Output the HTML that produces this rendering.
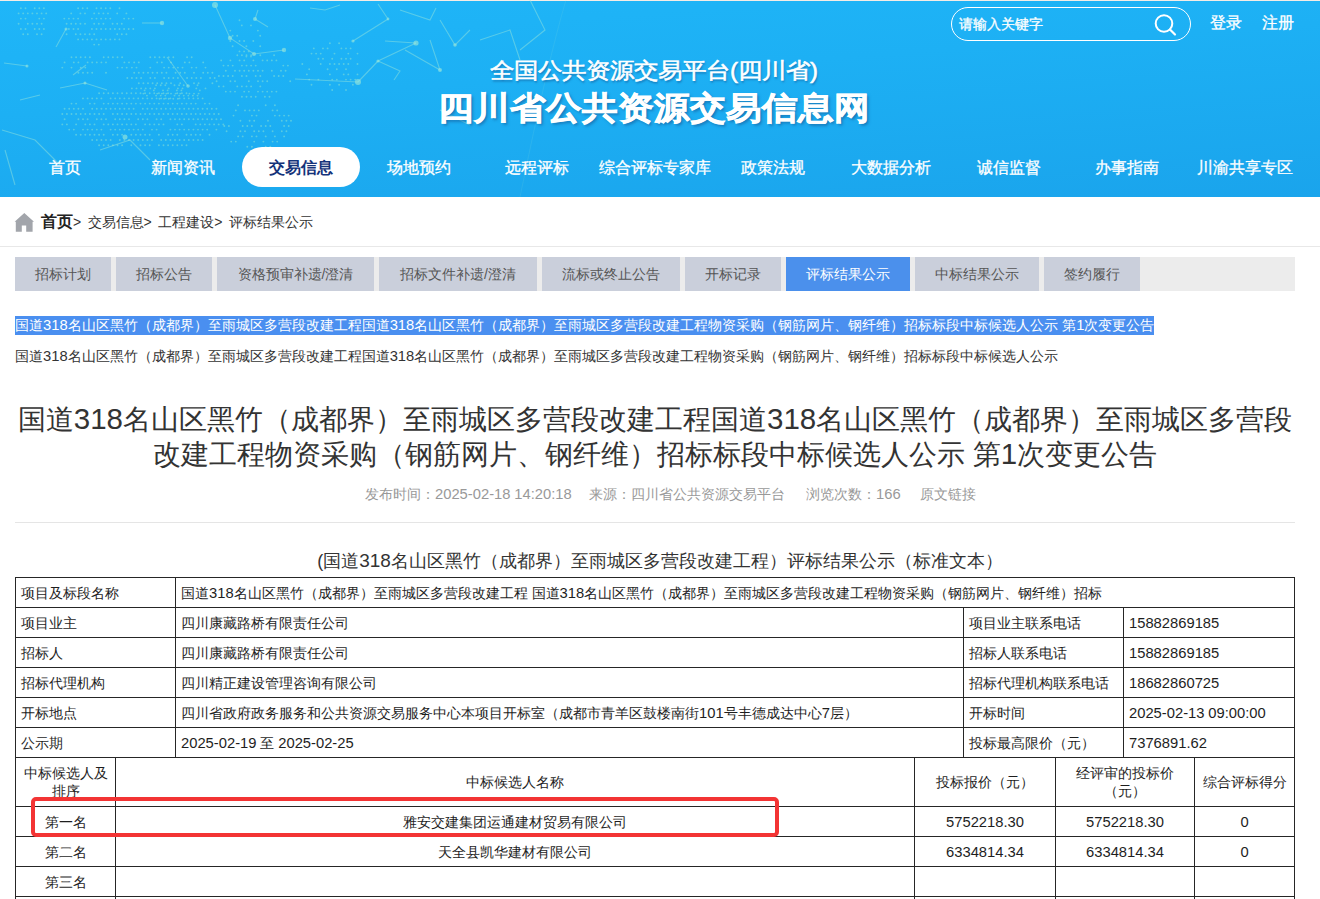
<!DOCTYPE html>
<html><head><meta charset="utf-8">
<style>
*{margin:0;padding:0;box-sizing:border-box}
html,body{width:1320px;height:899px;overflow:hidden;background:#fff}
body{font-family:"Liberation Sans",sans-serif;color:#333;position:relative}
.a{position:absolute;white-space:nowrap}
#hdr{position:absolute;left:0;top:0;width:1320px;height:197px;background:linear-gradient(176deg,#1fb6f8 0%,#1db0f4 40%,#1aa4ec 100%);overflow:hidden}
#hdr .topline{position:absolute;left:0;top:0;width:1320px;height:1px;background:#f4ece6}
.search{left:951px;top:7px;width:240px;height:34px;border:1px solid #fff;border-radius:17px}
.search span{position:absolute;left:7px;top:7px;font-size:14px;color:#fff;line-height:18px;-webkit-text-stroke:.3px #fff}
.hl{font-size:16px;color:#fff;line-height:20px;-webkit-text-stroke:.3px #fff}
.t1{left:0;width:1308px;text-align:center;top:56px;font-size:24px;font-weight:normal;-webkit-text-stroke:.6px #fff;transform:scaleY(.9);color:#fff;line-height:30px;text-shadow:1px 2px 2px rgba(20,80,140,.55)}
.t2{left:0;width:1308px;text-align:center;top:87px;font-size:36px;font-weight:bold;color:#fff;-webkit-text-stroke:.8px #fff;transform:scaleY(.9);transform-origin:50% 50%;line-height:42px;text-shadow:2px 3px 3px rgba(20,80,140,.55)}
.nav{top:147px;padding-top:1px;height:40px;width:118px;text-align:center;font-size:16px;line-height:40px;color:#fff;-webkit-text-stroke:.3px #fff}
.nav.on{background:#fff;border-radius:20px;color:#14337a;font-weight:bold;-webkit-text-stroke:0}
.crumb{top:212px;left:41px;font-size:14px;line-height:20px;color:#333}
.crumb b{font-size:16px;color:#222}
.crumb i{font-style:normal;margin-right:2.5px}
#sep{position:absolute;left:0;top:246px;width:1320px;height:1px;background:#e8e8e8}
#tabs{position:absolute;left:15px;top:257px;width:1280px;height:34px;background:#ececec;display:flex}
#tabs div{height:34px;line-height:34px;font-size:14px;color:#555;background:#cacfdb;text-align:center;margin-right:5px}
#tabs div.on{background:#4b90ec;color:#fff}
.sel{left:15px;top:316px;height:19px;width:1139px;background:#4a8ff0;color:#fff;font-size:14px;line-height:19px}
.l2{left:15px;top:347px;font-size:14px;line-height:19px;color:#333}
.title{left:15px;width:1280px;top:402px;text-align:center;white-space:normal;font-size:28px;line-height:34px;color:#333}
.meta{top:484px;font-size:14px;line-height:20px;color:#999}
#hr{position:absolute;left:15px;top:522px;width:1280px;height:1px;background:#e5e5e5}
.ttl{left:20px;width:1280px;top:549px;text-align:center;font-size:18px;line-height:24px;color:#333}
table{position:absolute;border-collapse:collapse;font-size:14px;color:#1e1e1e;table-layout:fixed}
td{border:1px solid #262626;height:30px;padding:0 5px;line-height:20px;white-space:nowrap;overflow:hidden}
#t2 td{text-align:center;padding:0 2px}
#red{position:absolute;left:31px;top:797px;width:748px;height:40px;border:4px solid #f33434;border-radius:5px}
.n{font-size:1.054em}
</style></head><body>
<div id="hdr">
<div class="topline"></div>
<svg style="position:absolute;left:0;top:0" width="600" height="197"><path d="M18.6 13.4h0.01 M18.6 23.8h0.01 M20.9 8.2h0.01 M20.9 18.6h0.01 M20.9 29.0h0.01 M23.2 13.4h0.01 M23.2 34.2h0.01 M25.5 8.2h0.01 M25.5 18.6h0.01 M25.5 29.0h0.01 M27.8 13.4h0.01 M27.8 23.8h0.01 M27.8 34.2h0.01 M32.4 13.4h0.01 M32.4 23.8h0.01 M34.7 8.2h0.01 M34.7 29.0h0.01 M37.0 13.4h0.01 M37.0 23.8h0.01 M37.0 34.2h0.01 M39.3 8.2h0.01 M39.3 18.6h0.01 M39.3 29.0h0.01 M41.6 13.4h0.01 M41.6 23.8h0.01 M41.6 34.2h0.01 M43.9 8.2h0.01 M43.9 18.6h0.01 M43.9 29.0h0.01 M46.2 13.4h0.01 M62.3 67.6h0.01 M62.3 114.0h0.01 M62.3 124.4h0.01 M64.3 18.6h0.01 M64.6 62.4h0.01 M64.6 108.8h0.01 M64.6 119.2h0.01 M66.6 23.8h0.01 M66.6 34.2h0.01 M66.9 114.0h0.01 M66.9 124.4h0.01 M68.9 18.6h0.01 M68.9 29.0h0.01 M69.2 108.8h0.01 M69.2 129.6h0.01 M71.2 13.4h0.01 M71.2 23.8h0.01 M71.5 57.2h0.01 M71.5 67.6h0.01 M71.5 103.6h0.01 M71.5 114.0h0.01 M73.5 18.6h0.01 M73.5 29.0h0.01 M73.8 62.4h0.01 M73.8 108.8h0.01 M73.8 129.6h0.01 M75.8 23.8h0.01 M75.8 34.2h0.01 M76.1 57.2h0.01 M76.1 103.6h0.01 M76.1 114.0h0.01 M76.1 124.4h0.01 M76.1 134.8h0.01 M78.1 8.2h0.01 M78.1 18.6h0.01 M78.1 29.0h0.01 M78.1 39.4h0.01 M78.4 62.4h0.01 M78.4 72.8h0.01 M78.4 108.8h0.01 M78.4 119.2h0.01 M80.4 13.4h0.01 M80.4 23.8h0.01 M80.4 34.2h0.01 M80.7 57.2h0.01 M80.7 67.6h0.01 M80.7 114.0h0.01 M80.7 134.8h0.01 M82.7 8.2h0.01 M82.7 39.4h0.01 M83.0 72.8h0.01 M83.0 98.4h0.01 M83.0 108.8h0.01 M83.0 119.2h0.01 M83.0 129.6h0.01 M85.0 13.4h0.01 M85.0 23.8h0.01 M85.0 34.2h0.01 M85.3 57.2h0.01 M85.3 67.6h0.01 M85.3 114.0h0.01 M85.3 124.4h0.01 M85.3 134.8h0.01 M87.3 8.2h0.01 M87.3 39.4h0.01 M87.6 62.4h0.01 M87.6 72.8h0.01 M87.6 98.4h0.01 M87.6 119.2h0.01 M87.6 129.6h0.01 M89.6 34.2h0.01 M89.9 57.2h0.01 M89.9 103.6h0.01 M89.9 114.0h0.01 M89.9 124.4h0.01 M89.9 134.8h0.01 M91.9 18.6h0.01 M91.9 29.0h0.01 M91.9 39.4h0.01 M92.2 62.4h0.01 M92.2 72.8h0.01 M92.2 98.4h0.01 M92.2 108.8h0.01 M92.2 129.6h0.01 M92.2 140.0h0.01 M94.2 13.4h0.01 M94.2 23.8h0.01 M94.2 34.2h0.01 M94.2 44.6h0.01 M94.5 103.6h0.01 M94.5 114.0h0.01 M94.5 124.4h0.01 M94.5 134.8h0.01 M96.5 8.2h0.01 M96.5 18.6h0.01 M96.5 29.0h0.01 M96.5 39.4h0.01 M96.8 62.4h0.01 M96.8 98.4h0.01 M96.8 108.8h0.01 M96.8 119.2h0.01 M96.8 129.6h0.01 M96.8 140.0h0.01 M98.8 13.4h0.01 M98.8 23.8h0.01 M98.8 44.6h0.01 M99.1 93.2h0.01 M99.1 114.0h0.01 M99.1 134.8h0.01 M99.1 145.2h0.01 M101.1 8.2h0.01 M101.1 18.6h0.01 M101.1 29.0h0.01 M101.1 39.4h0.01 M101.4 62.4h0.01 M101.4 98.4h0.01 M101.4 108.8h0.01 M101.4 119.2h0.01 M101.4 129.6h0.01 M101.4 140.0h0.01 M103.4 13.4h0.01 M103.4 23.8h0.01 M103.7 57.2h0.01 M103.7 93.2h0.01 M103.7 103.6h0.01 M103.7 114.0h0.01 M103.7 124.4h0.01 M103.7 134.8h0.01 M103.7 145.2h0.01 M105.7 8.2h0.01 M105.7 18.6h0.01 M105.7 29.0h0.01 M105.7 39.4h0.01 M106.0 62.4h0.01 M106.0 72.8h0.01 M106.0 108.8h0.01 M106.0 119.2h0.01 M106.0 140.0h0.01 M108.0 13.4h0.01 M108.3 57.2h0.01 M108.3 93.2h0.01 M108.3 103.6h0.01 M108.3 124.4h0.01 M108.3 145.2h0.01 M110.3 8.2h0.01 M110.3 18.6h0.01 M110.3 29.0h0.01 M110.3 39.4h0.01 M110.6 98.4h0.01 M110.6 108.8h0.01 M110.6 129.6h0.01 M110.6 140.0h0.01 M112.6 23.8h0.01 M112.9 57.2h0.01 M112.9 93.2h0.01 M112.9 103.6h0.01 M112.9 114.0h0.01 M112.9 124.4h0.01 M112.9 134.8h0.01 M112.9 145.2h0.01 M114.9 29.0h0.01 M114.9 39.4h0.01 M115.2 98.4h0.01 M115.2 108.8h0.01 M115.2 119.2h0.01 M115.2 129.6h0.01 M117.2 13.4h0.01 M117.2 23.8h0.01 M117.2 34.2h0.01 M117.5 57.2h0.01 M117.5 67.6h0.01 M117.5 93.2h0.01 M117.5 103.6h0.01 M117.5 114.0h0.01 M117.5 124.4h0.01 M117.5 134.8h0.01 M117.5 145.2h0.01 M119.5 8.2h0.01 M119.5 29.0h0.01 M119.5 39.4h0.01 M119.8 98.4h0.01 M119.8 108.8h0.01 M119.8 119.2h0.01 M119.8 129.6h0.01 M119.8 140.0h0.01 M121.8 23.8h0.01 M121.8 34.2h0.01 M122.1 57.2h0.01 M122.1 67.6h0.01 M122.1 93.2h0.01 M122.1 103.6h0.01 M122.1 114.0h0.01 M122.1 124.4h0.01 M122.1 134.8h0.01 M122.1 145.2h0.01 M124.1 18.6h0.01 M124.1 29.0h0.01 M124.4 62.4h0.01 M124.4 98.4h0.01 M124.4 108.8h0.01 M124.4 119.2h0.01 M124.4 129.6h0.01 M124.4 140.0h0.01 M126.4 13.4h0.01 M126.4 34.2h0.01 M126.7 67.6h0.01 M126.7 93.2h0.01 M126.7 103.6h0.01 M126.7 114.0h0.01 M126.7 124.4h0.01 M127.3 78.0h0.01 M128.7 18.6h0.01 M128.7 29.0h0.01 M129.0 62.4h0.01 M129.0 98.4h0.01 M129.0 108.8h0.01 M129.0 119.2h0.01 M129.0 129.6h0.01 M129.0 140.0h0.01 M131.3 93.2h0.01 M131.3 103.6h0.01 M131.3 114.0h0.01 M131.3 124.4h0.01 M131.3 134.8h0.01 M131.3 145.2h0.01 M131.9 67.6h0.01 M131.9 78.0h0.01 M131.9 88.4h0.01 M133.3 18.6h0.01 M133.3 29.0h0.01 M133.6 98.4h0.01 M133.6 108.8h0.01 M133.6 129.6h0.01 M133.6 140.0h0.01 M134.2 62.4h0.01 M134.2 72.8h0.01 M135.9 93.2h0.01 M135.9 103.6h0.01 M135.9 114.0h0.01 M135.9 124.4h0.01 M135.9 134.8h0.01 M136.5 67.6h0.01 M136.5 78.0h0.01 M136.5 88.4h0.01 M138.2 98.4h0.01 M138.2 119.2h0.01 M138.2 129.6h0.01 M138.2 140.0h0.01 M138.8 62.4h0.01 M138.8 72.8h0.01 M138.8 83.2h0.01 M140.5 93.2h0.01 M140.5 103.6h0.01 M140.5 114.0h0.01 M140.5 134.8h0.01 M140.5 145.2h0.01 M141.1 78.0h0.01 M141.1 88.4h0.01 M142.8 98.4h0.01 M142.8 108.8h0.01 M142.8 119.2h0.01 M142.8 129.6h0.01 M142.8 140.0h0.01 M143.4 72.8h0.01 M143.4 83.2h0.01 M143.4 93.6h0.01 M144.6 90.4h0.01 M145.1 93.2h0.01 M145.1 103.6h0.01 M145.1 114.0h0.01 M145.1 124.4h0.01 M145.1 134.8h0.01 M145.1 145.2h0.01 M145.7 88.4h0.01 M146.9 95.6h0.01 M147.4 98.4h0.01 M147.4 108.8h0.01 M147.4 119.2h0.01 M147.4 140.0h0.01 M148.0 72.8h0.01 M148.0 83.2h0.01 M149.7 93.2h0.01 M149.7 103.6h0.01 M149.7 114.0h0.01 M149.7 124.4h0.01 M149.7 134.8h0.01 M149.7 145.2h0.01 M150.3 57.2h0.01 M150.3 67.6h0.01 M150.3 78.0h0.01 M150.3 88.4h0.01 M152.0 98.4h0.01 M152.0 108.8h0.01 M152.0 129.6h0.01 M152.0 140.0h0.01 M152.6 72.8h0.01 M152.6 83.2h0.01 M153.8 90.4h0.01 M154.3 93.2h0.01 M154.3 103.6h0.01 M154.3 114.0h0.01 M154.3 124.4h0.01 M154.9 57.2h0.01 M154.9 78.0h0.01 M154.9 88.4h0.01 M156.1 85.2h0.01 M156.1 95.6h0.01 M156.6 98.4h0.01 M156.6 108.8h0.01 M156.6 119.2h0.01 M156.6 129.6h0.01 M157.2 62.4h0.01 M157.2 72.8h0.01 M157.2 83.2h0.01 M157.2 93.6h0.01 M158.9 93.2h0.01 M158.9 103.6h0.01 M158.9 114.0h0.01 M158.9 124.4h0.01 M158.9 134.8h0.01 M158.9 145.2h0.01 M159.5 57.2h0.01 M159.5 98.8h0.01 M160.7 85.2h0.01 M160.7 95.6h0.01 M161.2 98.4h0.01 M161.2 108.8h0.01 M161.2 119.2h0.01 M161.2 140.0h0.01 M161.8 62.4h0.01 M161.8 72.8h0.01 M161.8 83.2h0.01 M161.8 93.6h0.01 M163.0 90.4h0.01 M163.5 93.2h0.01 M163.5 103.6h0.01 M163.5 114.0h0.01 M163.5 124.4h0.01 M163.5 145.2h0.01 M164.1 57.2h0.01 M164.1 67.6h0.01 M164.1 78.0h0.01 M164.1 98.8h0.01 M165.3 85.2h0.01 M165.3 95.6h0.01 M165.8 98.4h0.01 M165.8 108.8h0.01 M165.8 140.0h0.01 M166.4 72.8h0.01 M166.4 83.2h0.01 M166.4 93.6h0.01 M167.6 90.4h0.01 M168.1 93.2h0.01 M168.1 103.6h0.01 M168.1 114.0h0.01 M168.1 134.8h0.01 M168.1 145.2h0.01 M168.7 57.2h0.01 M168.7 67.6h0.01 M168.7 78.0h0.01 M168.7 88.4h0.01 M168.7 98.8h0.01 M170.4 98.4h0.01 M170.4 108.8h0.01 M170.4 119.2h0.01 M170.4 129.6h0.01 M170.4 140.0h0.01 M171.0 62.4h0.01 M171.0 83.2h0.01 M171.0 93.6h0.01 M172.7 103.6h0.01 M172.7 114.0h0.01 M172.7 134.8h0.01 M172.7 145.2h0.01 M173.3 57.2h0.01 M173.3 67.6h0.01 M173.3 78.0h0.01 M173.3 98.8h0.01 M174.5 85.2h0.01 M174.5 95.6h0.01 M175.0 108.8h0.01 M175.0 119.2h0.01 M175.0 129.6h0.01 M175.0 140.0h0.01 M175.6 72.8h0.01 M175.6 93.6h0.01 M176.8 90.4h0.01 M177.3 93.2h0.01 M177.3 103.6h0.01 M177.3 114.0h0.01 M177.3 124.4h0.01 M177.3 134.8h0.01 M177.3 145.2h0.01 M177.9 67.6h0.01 M177.9 78.0h0.01 M177.9 88.4h0.01 M177.9 98.8h0.01 M179.1 85.2h0.01 M179.1 95.6h0.01 M179.6 98.4h0.01 M179.6 108.8h0.01 M179.6 119.2h0.01 M179.6 129.6h0.01 M179.6 140.0h0.01 M180.2 72.8h0.01 M180.2 83.2h0.01 M180.2 93.6h0.01 M181.4 90.4h0.01 M181.9 93.2h0.01 M181.9 103.6h0.01 M181.9 114.0h0.01 M181.9 124.4h0.01 M181.9 145.2h0.01 M182.5 67.6h0.01 M182.5 88.4h0.01 M183.7 85.2h0.01 M183.7 95.6h0.01 M184.2 98.4h0.01 M184.2 108.8h0.01 M184.2 119.2h0.01 M184.2 129.6h0.01 M184.2 140.0h0.01 M184.8 62.4h0.01 M184.8 72.8h0.01 M186.5 93.2h0.01 M186.5 103.6h0.01 M186.5 114.0h0.01 M186.5 134.8h0.01 M186.5 145.2h0.01 M187.1 57.2h0.01 M187.1 78.0h0.01 M188.3 95.6h0.01 M188.8 98.4h0.01 M188.8 108.8h0.01 M188.8 119.2h0.01 M188.8 129.6h0.01 M188.8 140.0h0.01 M189.4 62.4h0.01 M189.4 93.6h0.01 M191.1 103.6h0.01 M191.1 114.0h0.01 M191.1 134.8h0.01 M191.7 57.2h0.01 M191.7 67.6h0.01 M191.7 78.0h0.01 M192.9 95.6h0.01 M193.4 98.4h0.01 M193.4 108.8h0.01 M193.4 119.2h0.01 M193.4 129.6h0.01 M193.4 140.0h0.01 M194.0 72.8h0.01 M194.0 83.2h0.01 M194.0 93.6h0.01 M195.7 103.6h0.01 M195.7 114.0h0.01 M195.7 124.4h0.01 M195.7 134.8h0.01 M196.3 67.6h0.01 M196.3 78.0h0.01 M196.3 88.4h0.01 M197.5 85.2h0.01 M197.5 95.6h0.01 M198.0 98.4h0.01 M198.0 108.8h0.01 M198.0 119.2h0.01 M198.0 129.6h0.01 M198.0 140.0h0.01 M198.6 83.2h0.01 M198.6 93.6h0.01 M199.8 90.4h0.01 M200.3 114.0h0.01 M200.3 124.4h0.01 M200.3 134.8h0.01 M200.9 78.0h0.01 M202.6 98.4h0.01 M202.6 108.8h0.01 M202.6 119.2h0.01 M202.6 129.6h0.01 M202.6 140.0h0.01 M203.2 62.4h0.01 M203.2 72.8h0.01 M204.9 103.6h0.01 M204.9 114.0h0.01 M204.9 124.4h0.01 M205.5 67.6h0.01 M205.5 88.4h0.01 M207.2 108.8h0.01 M207.2 119.2h0.01 M207.2 129.6h0.01 M207.8 72.8h0.01 M209.5 103.6h0.01 M209.5 114.0h0.01 M209.5 124.4h0.01 M209.5 134.8h0.01 M210.1 78.0h0.01 M211.8 108.8h0.01 M211.8 119.2h0.01 M212.4 72.8h0.01 M212.4 83.2h0.01 M214.1 114.0h0.01 M214.1 124.4h0.01 M214.7 78.0h0.01 M216.4 108.8h0.01 M216.4 119.2h0.01 M216.4 129.6h0.01 M216.6 81.2h0.01 M218.7 114.0h0.01 M218.7 124.4h0.01 M218.9 76.0h0.01 M218.9 86.4h0.01 M221.0 119.2h0.01 M221.2 60.4h0.01 M223.3 124.4h0.01 M223.5 65.6h0.01 M223.5 76.0h0.01 M223.5 86.4h0.01 M224.3 126.0h0.01 M225.8 70.8h0.01 M225.8 91.6h0.01 M226.6 131.2h0.01 M228.1 65.6h0.01 M228.1 76.0h0.01 M228.9 126.0h0.01 M230.3 30.6h0.01 M230.3 41.0h0.01 M230.4 60.4h0.01 M230.4 81.2h0.01 M230.4 91.6h0.01 M231.2 141.6h0.01 M232.6 35.8h0.01 M232.6 46.2h0.01 M232.7 65.6h0.01 M232.7 76.0h0.01 M233.5 115.6h0.01 M235.0 70.8h0.01 M235.0 81.2h0.01 M235.0 91.6h0.01 M235.8 110.4h0.01 M235.8 141.6h0.01 M237.2 35.8h0.01 M237.3 55.2h0.01 M237.3 86.4h0.01 M238.1 105.2h0.01 M238.1 136.4h0.01 M239.5 20.2h0.01 M239.5 41.0h0.01 M239.5 51.4h0.01 M239.6 60.4h0.01 M239.6 70.8h0.01 M240.4 120.8h0.01 M240.4 131.2h0.01 M241.8 25.4h0.01 M241.9 55.2h0.01 M241.9 65.6h0.01 M241.9 76.0h0.01 M241.9 86.4h0.01 M241.9 96.8h0.01 M242.7 126.0h0.01 M242.7 136.4h0.01 M244.1 41.0h0.01 M244.1 51.4h0.01 M244.2 60.4h0.01 M244.2 70.8h0.01 M244.2 91.6h0.01 M245.0 110.4h0.01 M245.0 131.2h0.01 M246.4 46.2h0.01 M246.4 56.6h0.01 M246.5 55.2h0.01 M246.5 65.6h0.01 M246.5 76.0h0.01 M246.5 86.4h0.01 M246.5 96.8h0.01 M247.3 126.0h0.01 M247.3 146.8h0.01 M248.7 51.4h0.01 M248.8 70.8h0.01 M248.8 81.2h0.01 M248.8 91.6h0.01 M249.6 110.4h0.01 M249.6 120.8h0.01 M251.0 25.4h0.01 M251.0 56.6h0.01 M251.1 55.2h0.01 M251.1 65.6h0.01 M251.1 86.4h0.01 M251.1 96.8h0.01 M251.9 115.6h0.01 M251.9 126.0h0.01 M251.9 136.4h0.01 M251.9 146.8h0.01 M253.3 41.0h0.01 M253.4 60.4h0.01 M253.4 70.8h0.01 M254.2 110.4h0.01 M254.2 120.8h0.01 M254.2 131.2h0.01 M254.2 141.6h0.01 M255.7 65.6h0.01 M255.7 76.0h0.01 M255.7 96.8h0.01 M256.5 115.6h0.01 M256.5 136.4h0.01 M257.9 30.6h0.01 M258.0 70.8h0.01 M258.0 81.2h0.01 M258.0 91.6h0.01 M258.8 110.4h0.01 M258.8 131.2h0.01 M260.2 35.8h0.01 M260.2 46.2h0.01 M260.3 55.2h0.01 M260.3 76.0h0.01 M260.3 86.4h0.01 M261.1 126.0h0.01 M262.6 60.4h0.01 M262.6 70.8h0.01 M262.6 81.2h0.01 M262.6 91.6h0.01 M263.4 131.2h0.01 M263.4 141.6h0.01 M264.9 96.8h0.01 M265.7 105.2h0.01 M265.7 126.0h0.01 M265.7 136.4h0.01 M265.7 146.8h0.01 M267.2 60.4h0.01 M267.2 81.2h0.01 M267.2 91.6h0.01 M268.0 120.8h0.01 M269.5 96.8h0.01 M270.3 126.0h0.01 M270.3 146.8h0.01 M271.8 60.4h0.01 M271.8 70.8h0.01 M271.8 91.6h0.01 M272.6 110.4h0.01 M272.6 131.2h0.01 M272.6 141.6h0.01 M274.1 55.2h0.01 M274.1 76.0h0.01 M274.9 105.2h0.01 M274.9 115.6h0.01 M274.9 136.4h0.01 M276.4 60.4h0.01 M276.4 91.6h0.01 M277.2 110.4h0.01 M277.2 141.6h0.01 M278.7 76.0h0.01 M279.5 115.6h0.01 M281.0 70.8h0.01 M281.8 120.8h0.01 M281.8 131.2h0.01 M283.3 65.6h0.01 M283.3 76.0h0.01 M284.1 115.6h0.01 M284.1 126.0h0.01 M284.1 136.4h0.01 M285.6 70.8h0.01 M286.4 120.8h0.01 M286.4 131.2h0.01 M287.9 65.6h0.01 M288.7 115.6h0.01 M288.7 126.0h0.01 M290.2 81.2h0.01 M291.0 120.8h0.01 M302.3 64.0h0.01 M306.9 74.4h0.01 M309.2 69.2h0.01 M309.2 79.6h0.01 M311.5 53.6h0.01 M311.5 84.8h0.01 M313.8 48.4h0.01 M316.1 53.6h0.01 M318.4 58.8h0.01 M318.4 79.6h0.01 M320.7 53.6h0.01 M320.7 64.0h0.01 M323.0 48.4h0.01 M323.0 58.8h0.01 M327.6 48.4h0.01 M327.6 69.2h0.01 M329.9 43.2h0.01 M329.9 64.0h0.01 M329.9 74.4h0.01 M329.9 84.8h0.01 M332.2 58.8h0.01 M332.2 79.6h0.01 M332.2 90.0h0.01 M334.5 53.6h0.01 M334.5 64.0h0.01 M336.8 69.2h0.01 M336.8 79.6h0.01 M339.1 43.2h0.01 M339.1 64.0h0.01 M339.1 84.8h0.01 M341.4 48.4h0.01 M341.4 58.8h0.01 M343.7 64.0h0.01 M343.7 74.4h0.01 M346.0 48.4h0.01 M346.0 58.8h0.01 M346.0 69.2h0.01 M346.0 79.6h0.01 M346.0 90.0h0.01 M348.3 53.6h0.01 M348.3 64.0h0.01 M348.3 74.4h0.01 M350.6 48.4h0.01 M350.6 58.8h0.01 M350.6 79.6h0.01 M352.9 84.8h0.01 M355.2 79.6h0.01 M357.5 53.6h0.01 M357.5 64.0h0.01 M357.5 74.4h0.01" stroke="#8fe6d4" stroke-opacity=".5" stroke-width="1.9" stroke-linecap="round"/><path d="M215 5 L230 38 L254 54 L284 50" fill="none" stroke="#9fe9d9" stroke-opacity=".45" stroke-width="1.1"/><path d="M258 10 L255 19 L268 27" fill="none" stroke="#9fe9d9" stroke-opacity=".45" stroke-width="1.1"/><path d="M142 23 L162 23" fill="none" stroke="#9fe9d9" stroke-opacity=".45" stroke-width="1.1"/><path d="M66 29 L56 47" fill="none" stroke="#9fe9d9" stroke-opacity=".45" stroke-width="1.1"/><path d="M4 63 L27 66" fill="none" stroke="#9fe9d9" stroke-opacity=".45" stroke-width="1.1"/><path d="M86 65 L73 75" fill="none" stroke="#9fe9d9" stroke-opacity=".45" stroke-width="1.1"/><path d="M60 88 L85 83 L107 90" fill="none" stroke="#9fe9d9" stroke-opacity=".45" stroke-width="1.1"/><path d="M167 57 L188 86" fill="none" stroke="#9fe9d9" stroke-opacity=".45" stroke-width="1.1"/><path d="M353 41 L388 19 L378 4" fill="none" stroke="#9fe9d9" stroke-opacity=".45" stroke-width="1.1"/><path d="M358 82 L378 61 L416 43" fill="none" stroke="#9fe9d9" stroke-opacity=".45" stroke-width="1.1"/><path d="M295 79 L358 82" fill="none" stroke="#9fe9d9" stroke-opacity=".45" stroke-width="1.1"/><path d="M378 61 L400 71 L394 80" fill="none" stroke="#9fe9d9" stroke-opacity=".45" stroke-width="1.1"/><path d="M416 43 L385 41" fill="none" stroke="#9fe9d9" stroke-opacity=".45" stroke-width="1.1"/><path d="M310 8 L325 10 L340 5" fill="none" stroke="#9fe9d9" stroke-opacity=".45" stroke-width="1.1"/><path d="M400 10 L430 20 L436 8" fill="none" stroke="#9fe9d9" stroke-opacity=".45" stroke-width="1.1"/><path d="M440 20 L455 45 L470 30" fill="none" stroke="#9fe9d9" stroke-opacity=".45" stroke-width="1.1"/><path d="M430 40 L440 70 L405 50" fill="none" stroke="#9fe9d9" stroke-opacity=".45" stroke-width="1.1"/><path d="M2 130 L35 140 L60 165" fill="none" stroke="#9fe9d9" stroke-opacity=".45" stroke-width="1.1"/><path d="M100 150 L130 140 L150 160" fill="none" stroke="#9fe9d9" stroke-opacity=".45" stroke-width="1.1"/><path d="M250 160 L300 150 L330 170" fill="none" stroke="#9fe9d9" stroke-opacity=".45" stroke-width="1.1"/><path d="M530 0 L545 30 L520 50" fill="none" stroke="#9fe9d9" stroke-opacity=".45" stroke-width="1.1"/><path d="M480 40 L510 30 L520 60" fill="none" stroke="#9fe9d9" stroke-opacity=".45" stroke-width="1.1"/><path d="M440 110 L470 125" fill="none" stroke="#9fe9d9" stroke-opacity=".45" stroke-width="1.1"/><path d="M20 100 L40 95" fill="none" stroke="#9fe9d9" stroke-opacity=".45" stroke-width="1.1"/><path d="M5 150 L15 185" fill="none" stroke="#9fe9d9" stroke-opacity=".45" stroke-width="1.1"/><circle cx="215" cy="5" r="3.0" fill="#9fe9d9" fill-opacity=".6"/><circle cx="230" cy="38" r="2.2" fill="#9fe9d9" fill-opacity=".6"/><circle cx="254" cy="54" r="2.0" fill="#9fe9d9" fill-opacity=".6"/><circle cx="284" cy="50" r="2.2" fill="#9fe9d9" fill-opacity=".6"/><circle cx="255" cy="19" r="2.0" fill="#9fe9d9" fill-opacity=".6"/><circle cx="162" cy="23" r="2.2" fill="#9fe9d9" fill-opacity=".6"/><circle cx="358" cy="82" r="3.0" fill="#9fe9d9" fill-opacity=".6"/><circle cx="416" cy="43" r="2.6" fill="#9fe9d9" fill-opacity=".6"/><circle cx="378" cy="61" r="1.6" fill="#9fe9d9" fill-opacity=".6"/><circle cx="353" cy="41" r="1.6" fill="#9fe9d9" fill-opacity=".6"/><circle cx="388" cy="19" r="1.4" fill="#9fe9d9" fill-opacity=".6"/><circle cx="85" cy="83" r="1.5" fill="#9fe9d9" fill-opacity=".6"/><circle cx="188" cy="86" r="1.8" fill="#9fe9d9" fill-opacity=".6"/><circle cx="66" cy="29" r="1.5" fill="#9fe9d9" fill-opacity=".6"/><circle cx="27" cy="66" r="1.5" fill="#9fe9d9" fill-opacity=".6"/><circle cx="125" cy="137" r="2.5" fill="#9fe9d9" fill-opacity=".6"/><circle cx="440" cy="70" r="2.0" fill="#9fe9d9" fill-opacity=".6"/><circle cx="455" cy="45" r="1.8" fill="#9fe9d9" fill-opacity=".6"/><path d="M566 0 Q548 60 520 197" fill="none" stroke="#9fe9d9" stroke-opacity=".12" stroke-width="1"/></svg>
<div class="a search"><span>请输入关键字</span>
<svg style="position:absolute;left:200px;top:4px" width="26" height="26" viewBox="0 0 26 26"><circle cx="12" cy="11.5" r="8.3" fill="none" stroke="#fff" stroke-width="2"/><line x1="18" y1="17.5" x2="23" y2="22.5" stroke="#fff" stroke-width="2.2" stroke-linecap="round"/></svg>
</div>
<div class="a hl" style="left:1210px;top:13px">登录</div>
<div class="a hl" style="left:1262px;top:13px">注册</div>
<div class="a t1">全国公共资源交易平台(四川省)</div>
<div class="a t2">四川省公共资源交易信息网</div>
<div class="a nav" style="left:6px">首页</div>
<div class="a nav" style="left:124px">新闻资讯</div>
<div class="a nav on" style="left:242px">交易信息</div>
<div class="a nav" style="left:360px">场地预约</div>
<div class="a nav" style="left:478px">远程评标</div>
<div class="a nav" style="left:596px">综合评标专家库</div>
<div class="a nav" style="left:714px">政策法规</div>
<div class="a nav" style="left:832px">大数据分析</div>
<div class="a nav" style="left:950px">诚信监督</div>
<div class="a nav" style="left:1068px">办事指南</div>
<div class="a nav" style="left:1186px">川渝共享专区</div>
</div>

<svg class="a" style="left:14px;top:212px" width="21" height="21" viewBox="0 0 21 21"><path d="M10.3 1 L20 9.8 L18.6 9.8 L18.6 19.7 L12.2 19.7 L12.2 13.6 L7.8 13.6 L7.8 19.7 L1.8 19.7 L1.8 9.8 L0.6 9.8 Z" fill="#a2a5ab"/></svg>
<div class="a crumb"><b>首页</b><i>&gt; </i>交易信息<i>&gt; </i>工程建设<i>&gt; </i>评标结果公示</div>
<div id="sep"></div>

<div id="tabs">
<div style="width:96px">招标计划</div>
<div style="width:96px">招标公告</div>
<div style="width:157px">资格预审补遗/澄清</div>
<div style="width:158px">招标文件补遗/澄清</div>
<div style="width:138px">流标或终止公告</div>
<div style="width:96px">开标记录</div>
<div class="on" style="width:124px">评标结果公示</div>
<div style="width:124px">中标结果公示</div>
<div style="width:96px">签约履行</div>
</div>

<div class="a sel">国道<span class="n">318</span>名山区黑竹（成都界）至雨城区多营段改建工程国道<span class="n">318</span>名山区黑竹（成都界）至雨城区多营段改建工程物资采购（钢筋网片、钢纤维）招标标段中标候选人公示 第<span class="n">1</span>次变更公告</div>
<div class="a l2">国道<span class="n">318</span>名山区黑竹（成都界）至雨城区多营段改建工程国道<span class="n">318</span>名山区黑竹（成都界）至雨城区多营段改建工程物资采购（钢筋网片、钢纤维）招标标段中标候选人公示</div>

<div class="a title">国道<span class="n">318</span>名山区黑竹（成都界）至雨城区多营段改建工程国道<span class="n">318</span>名山区黑竹（成都界）至雨城区多营段改建工程物资采购（钢筋网片、钢纤维）招标标段中标候选人公示 第<span class="n">1</span>次变更公告</div>

<div class="a meta" style="left:365px">发布时间：<span class="n">2025-02-18</span> <span class="n">14:20:18</span></div>
<div class="a meta" style="left:589px">来源：四川省公共资源交易平台</div>
<div class="a meta" style="left:806px">浏览次数：<span class="n">166</span></div>
<div class="a meta" style="left:920px">原文链接</div>
<div id="hr"></div>

<div class="a ttl">(国道<span class="n">318</span>名山区黑竹（成都界）至雨城区多营段改建工程）评标结果公示（标准文本）</div>

<table id="t1" style="left:15px;top:577px;width:1279px">
<colgroup><col style="width:160px"><col style="width:788px"><col style="width:160px"><col style="width:171px"></colgroup>
<tr><td>项目及标段名称</td><td colspan="3">国道<span class="n">318</span>名山区黑竹（成都界）至雨城区多营段改建工程 国道<span class="n">318</span>名山区黑竹（成都界）至雨城区多营段改建工程物资采购（钢筋网片、钢纤维）招标</td></tr>
<tr><td>项目业主</td><td>四川康藏路桥有限责任公司</td><td>项目业主联系电话</td><td><span class="n">15882869185</span></td></tr>
<tr><td>招标人</td><td>四川康藏路桥有限责任公司</td><td>招标人联系电话</td><td><span class="n">15882869185</span></td></tr>
<tr><td>招标代理机构</td><td>四川精正建设管理咨询有限公司</td><td>招标代理机构联系电话</td><td><span class="n">18682860725</span></td></tr>
<tr><td>开标地点</td><td>四川省政府政务服务和公共资源交易服务中心本项目开标室（成都市青羊区鼓楼南街<span class="n">101</span>号丰德成达中心<span class="n">7</span>层）</td><td>开标时间</td><td><span class="n">2025-02-13</span> <span class="n">09:00:00</span></td></tr>
<tr><td>公示期</td><td><span class="n">2025-02-19</span> 至 <span class="n">2025-02-25</span></td><td>投标最高限价（元）</td><td><span class="n">7376891.62</span></td></tr>
</table>

<table id="t2" style="left:15px;top:757px;width:1279px">
<colgroup><col style="width:100px"><col style="width:799px"><col style="width:141px"><col style="width:139px"><col style="width:100px"></colgroup>
<tr><td style="height:49px;line-height:18px;vertical-align:top;padding-top:6px"><div style="height:40px;white-space:normal">中标候选人及排序</div></td><td style="height:49px">中标候选人名称</td><td>投标报价（元）</td><td style="line-height:18px;white-space:normal">经评审的投标价（元）</td><td>综合评标得分</td></tr>
<tr><td>第一名</td><td>雅安交建集团运通建材贸易有限公司</td><td><span class="n">5752218.30</span></td><td><span class="n">5752218.30</span></td><td><span class="n">0</span></td></tr>
<tr><td>第二名</td><td>天全县凯华建材有限公司</td><td><span class="n">6334814.34</span></td><td><span class="n">6334814.34</span></td><td><span class="n">0</span></td></tr>
<tr><td>第三名</td><td></td><td></td><td></td><td></td></tr>
<tr><td></td><td></td><td></td><td></td><td></td></tr>
</table>
<div id="red"></div>
</body></html>
